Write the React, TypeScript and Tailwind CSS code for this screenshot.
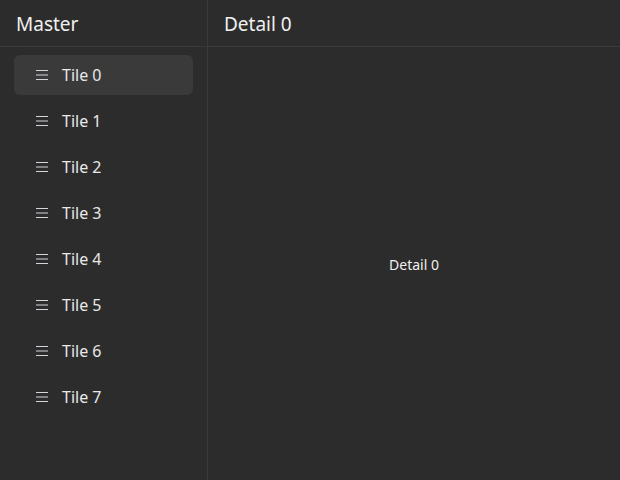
const tiles = [0, 1, 2, 3, 4, 5, 6, 7]

function MenuIcon() {
  return (
    <svg width="12" height="12" viewBox="0 0 12 12" className="text-gray-300">
      <path d="M0 1.5h12M0 6h12M0 10.5h12" stroke="currentColor" strokeWidth="1" />
    </svg>
  )
}

export default function App() {
  return (
    <main
      className="flex h-[480px] w-[620px] bg-[#2c2c2c] text-white"
      style={{ fontFamily: '"Noto Sans", "Open Sans", sans-serif' }}
    >
      {/* Master list */}
      <aside className="flex w-[208px] flex-col border-r border-[#3a3a3a]">
        <header className="flex h-[47px] items-center border-b border-[#3a3a3a] px-4 pt-[3px]">
          <h1 className="text-[19px] text-[#f0f0f0]">Master</h1>
        </header>
        <ul className="flex flex-col gap-[6px] px-[14px] pt-2">
          {tiles.map((i) => (
            <li
              key={i}
              className={
                i === 0
                  ? 'flex h-10 items-center gap-[14px] rounded-md bg-[#3a3a3a] pl-[22px]'
                  : 'flex h-10 items-center gap-[14px] rounded-md pl-[22px]'
              }
            >
              <MenuIcon />
              <span className="text-[16px] text-[#e8e8e8]">Tile {i}</span>
            </li>
          ))}
        </ul>
      </aside>

      {/* Detail */}
      <section className="flex flex-1 flex-col">
        <header className="flex h-[47px] items-center border-b border-[#3a3a3a] px-4 pt-[3px]">
          <h2 className="text-[19px] text-[#f0f0f0]">Detail 0</h2>
        </header>
        <div className="flex flex-1 items-center justify-center pt-[1px]">
          <span className="text-[14px] text-[#f0f0f0]">Detail 0</span>
        </div>
      </section>
    </main>
  )
}
